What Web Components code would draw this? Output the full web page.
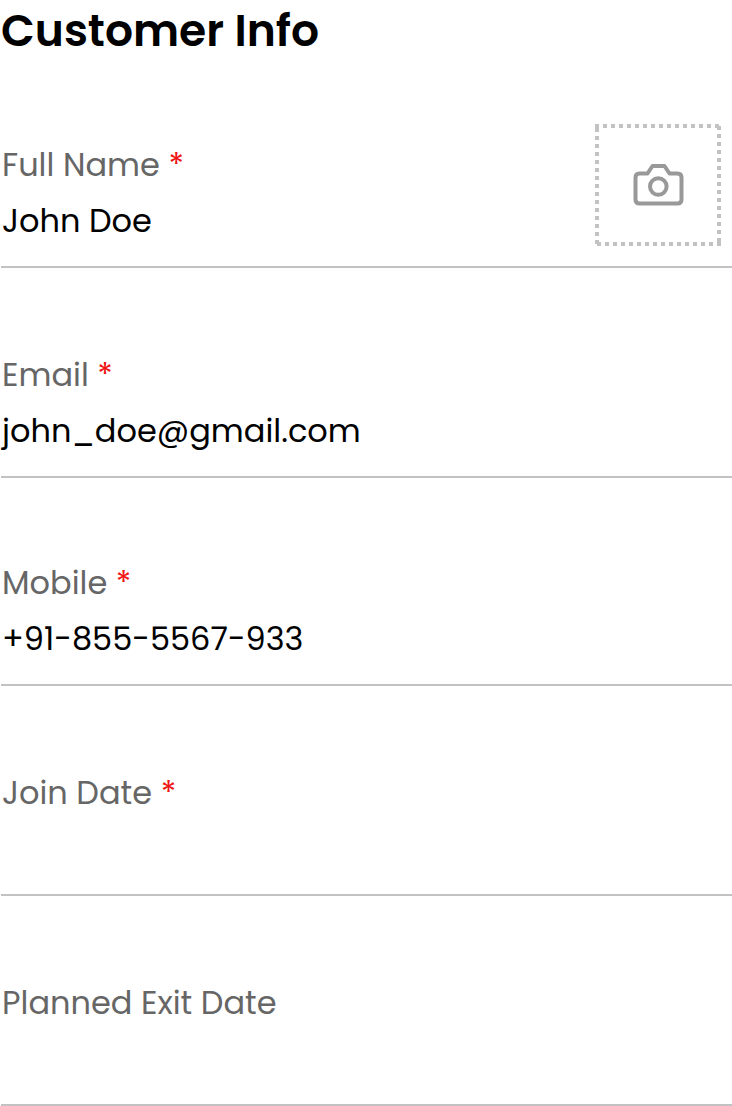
<!DOCTYPE html>
<html lang="en">
<head>
<meta charset="utf-8">
<title>Customer Info</title>
<style>
body { margin: 0; background: #fff; font-family: Poppins, Inter, sans-serif; }
</style>
</head>
<body>
<customer-form></customer-form>
<script>
class PhotoPicker extends HTMLElement {
  connectedCallback() {
    this.attachShadow({ mode: 'open' }).innerHTML = `<style>
      :host { display: block; width: 126px; height: 122px; }
      svg { display: block; }
    </style>
    <svg width="126" height="122" viewBox="0 0 126 122" fill="none">
      <g stroke="#c2c2c2" stroke-width="4" stroke-dasharray="4 4">
        <path d="M0 2H124"/><path d="M124 2V122"/><path d="M2 120H126"/><path d="M2 4V120"/>
      </g>
      <path d="M124 118V122" stroke="#c2c2c2" stroke-width="4"/>
      <g stroke="#999" stroke-width="4" stroke-linejoin="round">
        <path d="M44.500 49.500H52.500L57.500 42H69.500L74.500 49.500H82.500Q86.500 49.500 86.500 53.500V75.500Q86.500 79.500 82.500 79.500H44.500Q40.500 79.500 40.500 75.500V53.500Q40.500 49.500 44.500 49.500Z"/>
        <circle cx="63.300" cy="62.500" r="8.300"/>
      </g>
    </svg>`;
  }
}
customElements.define('photo-picker', PhotoPicker);

class FormField extends HTMLElement {
  connectedCallback() {
    const label = this.getAttribute('label');
    const value = this.getAttribute('value') || '';
    const star = this.hasAttribute('required') ? ' <span>*</span>' : '';
    this.attachShadow({ mode: 'open' }).innerHTML = `<style>
      :host { display: flex; align-items: flex-start; justify-content: space-between; height: 129px; padding-left: 1px; border-bottom: 2px solid #c2c2c2; font-size: 32px; line-height: 56px; }
      .label { color: #666; height: 56px; }
      .label span { color: #f01414; }
      .value { color: #000; height: 56px; }
    </style>
    <div>
      <div class="label">${label}${star}</div>
      <div class="value">${value}</div>
    </div>
    <slot></slot>`;
  }
}
customElements.define('form-field', FormField);

class CustomerForm extends HTMLElement {
  connectedCallback() {
    this.attachShadow({ mode: 'open' }).innerHTML = `<style>
      :host { display: block; box-sizing: border-box; height: 1106px; padding-left: 1px; overflow: hidden; }
      h1 { margin: 0 0 75px; height: 62px; line-height: 62px; font-size: 44px; font-weight: 600; }
      form-field { margin-bottom: 79px; }
      .tight { margin-bottom: 77px; }
      .last { margin-bottom: 0; }
      photo-picker { margin: -13px 11px 0 0; }
    </style>
    <h1>Customer Info</h1>
    <form-field label="Full Name" value="John Doe" required><photo-picker></photo-picker></form-field>
    <form-field class="tight" label="Email" value="john_doe@gmail.com" required></form-field>
    <form-field label="Mobile" value="+91-855-5567-933" required></form-field>
    <form-field label="Join Date" required></form-field>
    <form-field class="last" label="Planned Exit Date"></form-field>`;
  }
}
customElements.define('customer-form', CustomerForm);
</script>
</body>
</html>
